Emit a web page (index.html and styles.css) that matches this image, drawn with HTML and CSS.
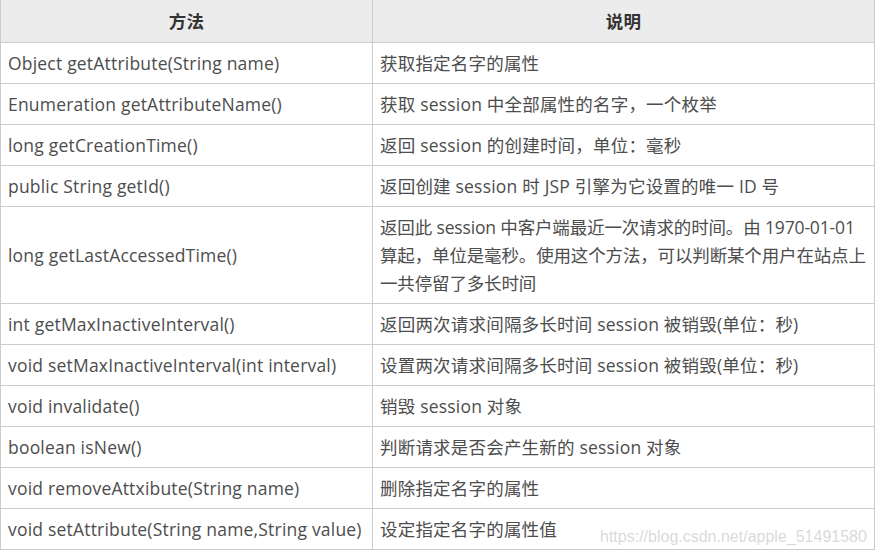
FILE: index.html
```html
<!DOCTYPE html>
<html lang="zh-CN">
<head>
<meta charset="utf-8">
<title>session 方法</title>
<link rel="stylesheet" href="styles.css">
</head>
<body>
<div class="wrap">
<table class="methods">
  <colgroup><col class="c1"><col class="c2"></colgroup>
  <thead>
    <tr><th>方法</th><th>说明</th></tr>
  </thead>
  <tbody>
    <tr><td>Object getAttribute(String name)</td><td>获取指定名字的属性</td></tr>
    <tr><td>Enumeration getAttributeName()</td><td>获取 session 中全部属性的名字，一个枚举</td></tr>
    <tr><td>long getCreationTime()</td><td>返回 session 的创建时间，单位：毫秒</td></tr>
    <tr><td>public String getId()</td><td>返回创建 session 时 JSP 引擎为它设置的唯一 ID 号</td></tr>
    <tr><td>long getLastAccessedTime()</td><td class="multi">返回此 session 中客户端最近一次请求的时间。由 1970-01-01<br>算起，单位是毫秒。使用这个方法，可以判断某个用户在站点上<br>一共停留了多长时间</td></tr>
    <tr><td>int getMaxInactiveInterval()</td><td>返回两次请求间隔多长时间 session 被销毁(单位：秒)</td></tr>
    <tr><td>void setMaxInactiveInterval(int interval)</td><td>设置两次请求间隔多长时间 session 被销毁(单位：秒)</td></tr>
    <tr><td>void invalidate()</td><td>销毁 session 对象</td></tr>
    <tr><td>boolean isNew()</td><td>判断请求是否会产生新的 session 对象</td></tr>
    <tr><td>void removeAttxibute(String name)</td><td>删除指定名字的属性</td></tr>
    <tr><td>void setAttribute(String name,String value)</td><td>设定指定名字的属性值</td></tr>
  </tbody>
</table>
<div class="watermark">https://blog.csdn.net/apple_51491580</div>
</div>
</body>
</html>
```
FILE: styles.css
```css
html, body {
  margin: 0;
  padding: 0;
  background: #fff;
}
.wrap {
  position: relative;
  width: 875px;
  overflow: hidden;
}
.methods {
  width: 875px;
  margin-top: -1px;
  border-collapse: collapse;
  table-layout: fixed;
  font-family: "Open Sans", "Noto Sans CJK SC", sans-serif;
  font-size: 17.5px;
  letter-spacing: 0.2px;
  color: #4d4d4d;
}
.c1 { width: 372px; }
.methods th,
.methods td {
  border: 1px solid #ccc;
  line-height: 28px;
  padding: 6px 1px 6px 7px;
  text-align: left;
  vertical-align: middle;
  font-weight: normal;
  white-space: nowrap;
}
.methods td.multi {
  letter-spacing: -0.15px;
}
.methods th {
  background: #ececec;
  color: #333;
  font-weight: bold;
  text-align: center;
  padding: 7px 7px;
}
.watermark {
  position: absolute;
  left: 600px;
  top: 527px;
  font-family: "Liberation Sans", Arial, sans-serif;
  font-size: 16px;
  line-height: 20px;
  color: rgba(185, 185, 185, 0.55);
  white-space: nowrap;
}
```
